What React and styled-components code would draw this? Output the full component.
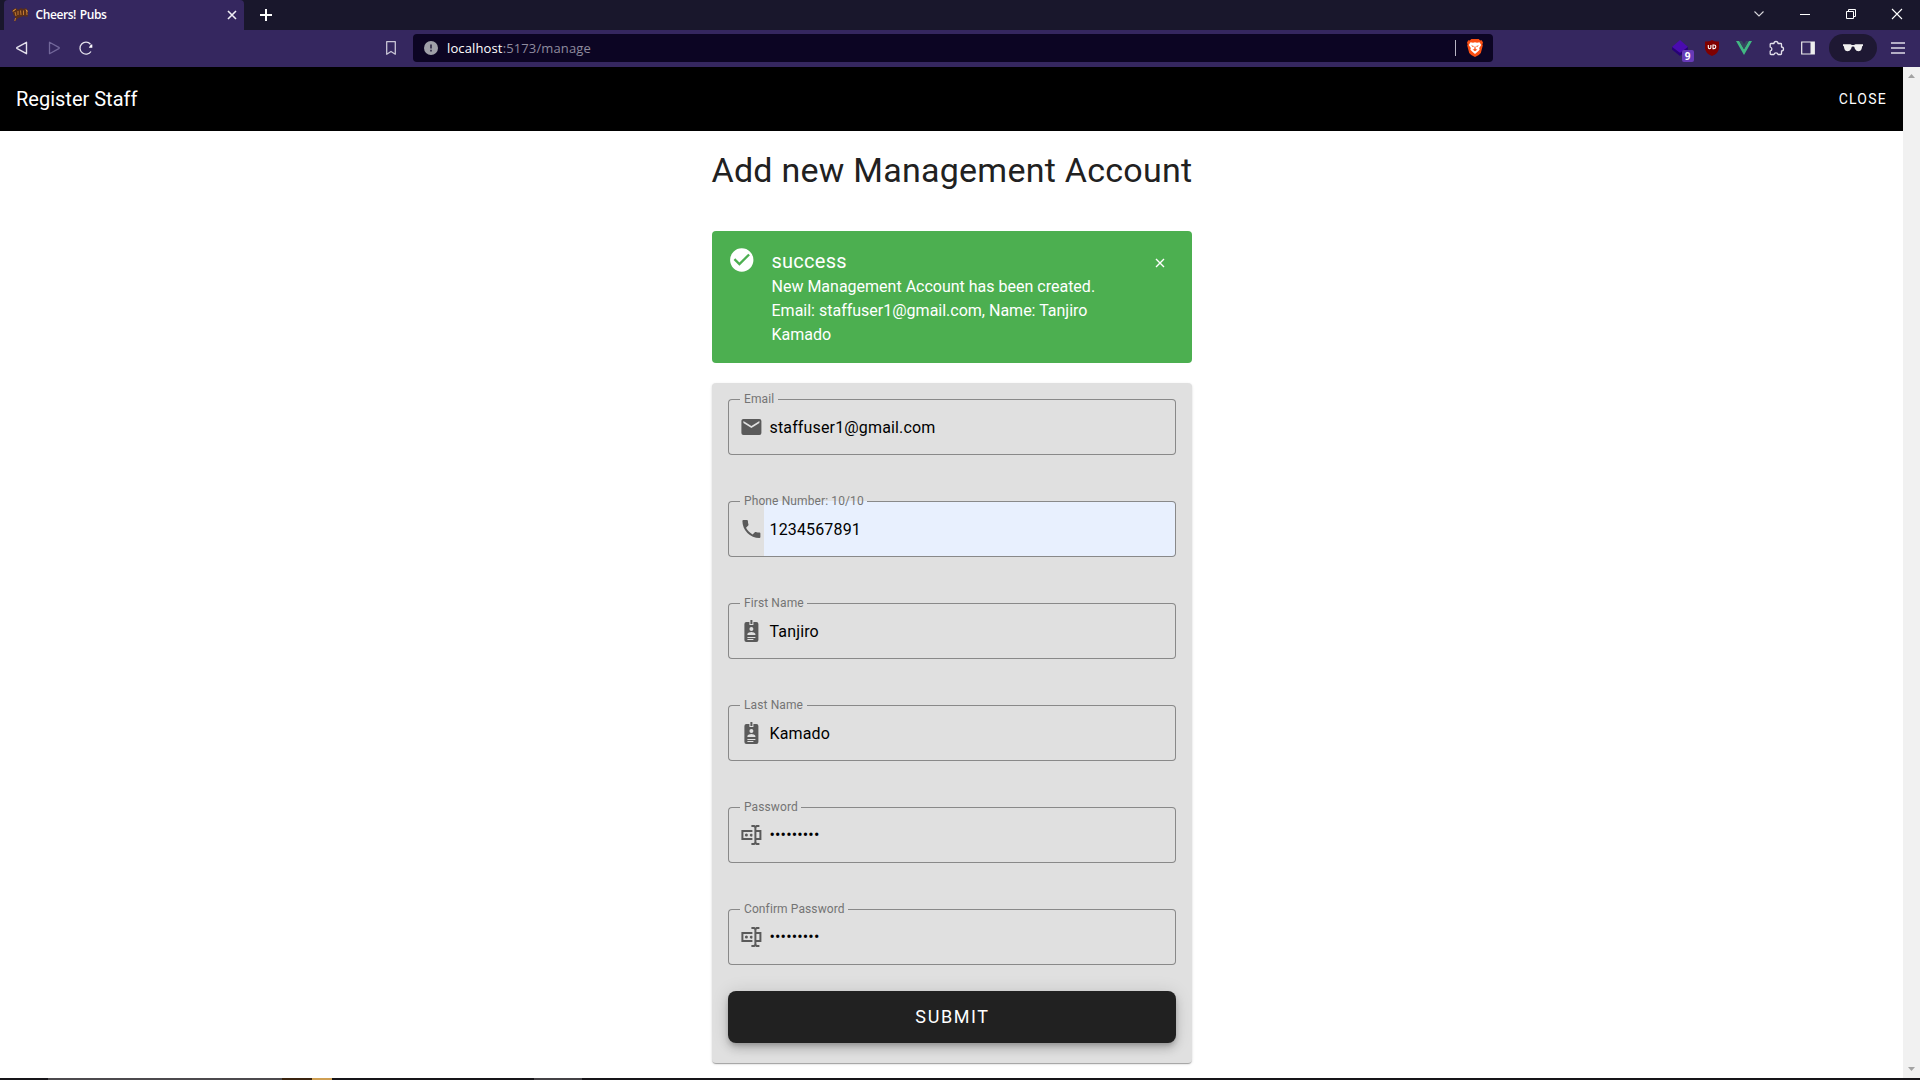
import React from "react";
import styled, { createGlobalStyle, css } from "styled-components";

const Global = createGlobalStyle`
  *, *::before, *::after { box-sizing: border-box; }
  html, body { margin: 0; padding: 0; background: #fff; overflow: hidden; }
  body { font-family: Roboto, "Liberation Sans", sans-serif; font-size: 16px; line-height: 24px; }
`;

const Screen = styled.div`
  width: 1920px; height: 1080px; display: flex; flex-direction: column; overflow: hidden; background: #fff;
`;

/* browser chrome */
const TabStrip = styled.div`
  height: 30px; flex: none; display: flex; background: #19172c; padding-left: 4px;
`;
const Tab = styled.div`
  width: 240px; height: 30px; display: flex; align-items: center; padding: 0 7px 0 8px;
  background: #35275f; border-radius: 4px 4px 0 0; color: #fff;
`;
const TabTitle = styled.span`
  flex: 1; margin-left: 6.5px; font: 600 12px/16px "Open Sans", "Noto Sans", sans-serif; letter-spacing: -0.41px; word-spacing: 1px;
`;
const Glyph = styled.svg`
  display: block; flex: none; overflow: visible;
`;
const NewTab = styled.div`
  width: 44px; display: flex; align-items: center; justify-content: center;
`;
const WindowControls = styled.div`
  margin-left: auto; display: flex; height: 28px;
`;
const Control = styled.div`
  width: 46px; display: flex; align-items: center; justify-content: center;
`;
const Toolbar = styled.div`
  height: 37px; flex: none; display: flex; align-items: center; background: #35275f; padding: 0 0 1px 6px;
`;
const ToolButton = styled.div`
  width: 32px; height: 36px; display: flex; align-items: center; justify-content: center;
`;
const BookmarkSlot = styled.div`
  width: 32px; height: 36px; display: flex; align-items: center; justify-content: center; margin-left: 273px;
`;
const AddressBar = styled.div`
  width: 1080px; height: 28px; margin-left: 6px; display: flex; align-items: center; background: #0c0523;
  border-radius: 4px; padding: 0 10px 0 11px;
`;
const Url = styled.span`
  flex: 1; margin-left: 9px; color: #8f8b9e; font: 400 13px/20px "Open Sans", "Noto Sans", sans-serif; letter-spacing: 0.13px;
`;
const Host = styled.span` color: #fff; `;
const Separator = styled.div`
  width: 1px; height: 16px; background: #b8b5c3; margin-right: 11px;
`;
const Extensions = styled.div`
  margin-left: auto; display: flex; align-items: center; padding-right: 6px;
`;
const ExtensionButton = styled.div`
  width: 32px; height: 36px; display: flex; align-items: center; justify-content: center; position: relative;
`;
const Badge = styled.span`
  position: absolute; left: 17.5px; top: 20px; width: 12px; height: 12px; border-radius: 2px; background: #673ab7;
  color: #fff; font: 700 10px/12px "Open Sans", sans-serif; text-align: center;
`;
const PrivatePill = styled.div`
  width: 48px; height: 28px; border-radius: 14px; background: #1e1833; margin: 0 5px;
  display: flex; align-items: center; justify-content: center;
`;

/* page */
const Viewport = styled.div` flex: 1; min-height: 0; display: flex; `;
const Page = styled.div` flex: 1; display: flex; flex-direction: column; background: #fff; `;
const AppBar = styled.header`
  height: 64px; flex: none; display: flex; align-items: center; justify-content: space-between;
  padding: 0 16px; background: #000; color: #fff;
`;
const AppTitle = styled.div` font-size: 20px; line-height: 30px; `;
const CloseButton = styled.button`
  border: 0; padding: 0; background: none; color: #fff; font: 400 14px/36px Roboto, sans-serif;
  letter-spacing: 1.25px; text-transform: uppercase;
`;
const Main = styled.main` width: 480px; margin: 0 auto; display: flex; flex-direction: column; `;
const Heading = styled.h1`
  margin: 15px 0 37px; font: 400 34px/48px Roboto, sans-serif; letter-spacing: 0.25px; color: #212121; white-space: nowrap;
`;
const Alert = styled.section`
  height: 132px; display: flex; padding: 15px 16px 16px; background: #4caf50; color: #fff; border-radius: 4px;
`;
const AlertBody = styled.div` width: 346px; margin: 1px 0 0 16px; `;
const AlertTitle = styled.div` font: 400 20px/28px Roboto, sans-serif; letter-spacing: 0.25px; `;
const AlertText = styled.p` margin: 0; font: 400 16px/24px Roboto, sans-serif; letter-spacing: 0; `;
const Dismiss = styled.div` margin: 12px 0 0 37px; `;
const Card = styled.form`
  margin-top: 20px; height: 680px; padding: 16px; display: flex; flex-direction: column; gap: 46px;
  background: #e0e0e0; border-radius: 4px;
  box-shadow: 0 2px 1px -1px rgba(0,0,0,.2), 0 1px 1px rgba(0,0,0,.14), 0 1px 3px rgba(0,0,0,.12);
`;
const Field = styled.div`
  position: relative; height: 56px; flex: none; display: flex; align-items: center; padding-left: 11px;
`;
const FieldIcon = styled.div`
  width: 24px; height: 24px; margin-right: 1px; display: flex; color: #5a5a5a;
`;
const Value = styled.div`
  flex: 1; height: 56px; display: flex; align-items: center; color: #000;
  padding: ${(p) => (p.$secret ? "0" : "2px")} 0 0 6px;
  font-size: 16px; letter-spacing: 0.15px;
  ${(p) => p.$filled && css`background: #e8f0fe; border-radius: 0 4px 4px 0;`}
`;
const Outline = styled.div` position: absolute; inset: 0; display: flex; pointer-events: none; `;
const OutlineStart = styled.div`
  width: 12px; border: 1px solid #898989; border-right: 0; border-radius: 4px 0 0 4px;
`;
const OutlineNotch = styled.div`
  border-bottom: 1px solid #898989; padding: 0 3.5px 0 4.5px;
`;
const Label = styled.span`
  display: block; margin-top: -10px; font-size: 12px; line-height: 20px; letter-spacing: 0.11px; color: #747474; white-space: nowrap;
`;
const OutlineEnd = styled.div`
  flex: 1; border: 1px solid #898989; border-left: 0; border-radius: 0 4px 4px 0;
`;
const Submit = styled.button`
  height: 52px; flex: none; margin-top: -20px; border: 0; border-radius: 8px; background: #212121; color: #fff;
  padding: 0 0 1px 2px; font: 400 18px/51px Roboto, sans-serif; letter-spacing: 1.6px;
  box-shadow: 0 3px 5px -1px rgba(0,0,0,.2), 0 6px 10px rgba(0,0,0,.14), 0 1px 18px rgba(0,0,0,.12);
`;
const Scrollbar = styled.div`
  width: 17px; display: flex; flex-direction: column; justify-content: space-between; align-items: center;
  background: #f1f1f1; padding: 7px 0;
`;
const Taskbar = styled.div` height: 2px; flex: none; display: flex; background: #171519; `;
const Slice = styled.div` width: ${(p) => p.$w}px; background: ${(p) => p.$c}; `;

const paths = {
  email: "m20 8l-8 5l-8-5V6l8 5l8-5m0-2H4c-1.11 0-2 .89-2 2v12a2 2 0 0 0 2 2h16a2 2 0 0 0 2-2V6a2 2 0 0 0-2-2",
  phone: "M6.62 10.79c1.44 2.83 3.76 5.15 6.59 6.59l2.2-2.2c.28-.28.67-.36 1.02-.25c1.12.37 2.32.57 3.57.57a1 1 0 0 1 1 1V20a1 1 0 0 1-1 1A17 17 0 0 1 3 4a1 1 0 0 1 1-1h3.5a1 1 0 0 1 1 1c0 1.25.2 2.45.57 3.57c.11.35.03.74-.25 1.02z",
  badge: "M17 3h-3v3h-4V3H7a2 2 0 0 0-2 2v16a2 2 0 0 0 2 2h10a2 2 0 0 0 2-2V5a2 2 0 0 0-2-2m-5 5a2 2 0 0 1 2 2a2 2 0 0 1-2 2a2 2 0 0 1-2-2a2 2 0 0 1 2-2m4 8H8v-1c0-1.33 2.67-2 4-2s4 .67 4 2zm-3-11h-2V1h2zm3 14H8v-1h8zm-2 2H8v-1h6z",
  password: "M17 7h5v10h-5v2a1 1 0 0 0 1 1h2v2h-2.5c-.55 0-1.5-.45-1.5-1c0 .55-.95 1-1.5 1H12v-2h2a1 1 0 0 0 1-1V5a1 1 0 0 0-1-1h-2V2h2.5c.55 0 1.5.45 1.5 1c0-.55.95-1 1.5-1H20v2h-2a1 1 0 0 0-1 1zM2 7h11v2H4v6h9v2H2zm18 8V9h-3v6zM8.5 12A1.5 1.5 0 0 0 7 10.5A1.5 1.5 0 0 0 5.5 12A1.5 1.5 0 0 0 7 13.5A1.5 1.5 0 0 0 8.5 12m4.500-.890c-.6-.610-1.590-.610-2.100 0c-.590.590-.590 1.540 0 2.120c.510.610 1.500.610 2.100 0z",
};

const fields = [
  { label: "Email", icon: "email", value: "staffuser1@gmail.com" },
  { label: "Phone Number: 10/10", icon: "phone", value: "1234567891", filled: true },
  { label: "First Name", icon: "badge", value: "Tanjiro" },
  { label: "Last Name", icon: "badge", value: "Kamado" },
  { label: "Password", icon: "password", value: "•••••••••", secret: true },
  { label: "Confirm Password", icon: "password", value: "•••••••••", secret: true },
];

function TextField({ label, icon, value, filled, secret }) {
  return (
    <Field>
      <FieldIcon>
        <Glyph width="24" height="24" viewBox="-0.4 0 24 24" fill="currentColor"><path d={paths[icon]} /></Glyph>
      </FieldIcon>
      <Value $filled={filled} $secret={secret}>{value}</Value>
      <Outline>
        <OutlineStart />
        <OutlineNotch><Label>{label}</Label></OutlineNotch>
        <OutlineEnd />
      </Outline>
    </Field>
  );
}

function BrowserTabs() {
  return (
    <TabStrip>
      <Tab>
        <Glyph width="17" height="17" viewBox="0 0 17 17">
          <path d="M0 3l4-2 2 2 3-2 2 1 3-1 2 3-.5 6-3.500-1-3 1-3 1-3.500 4 1-5L1.500 8z" fill="#5a2f1a" />
          <path d="M1 4l3-2M3 5l1 4M6 4v4M8.500 3.500L9 8M11.500 3.500v4.500M14.500 3l.5 5M3.500 11l-.7 3" stroke="#c27a30" strokeWidth="1" />
          <path d="M1 4.500l2-2M14 2.500l1.500 2" stroke="#e2a04a" strokeWidth="1" />
        </Glyph>
        <TabTitle>Cheers! Pubs</TabTitle>
        <Glyph width="10" height="10" viewBox="0 0 10 10"><path d="M1 1l8 8M9 1L1 9" stroke="#f0eef5" strokeWidth="1.6" /></Glyph>
      </Tab>
      <NewTab><Glyph width="12" height="12" viewBox="0 0 12 12"><path d="M6 0v12M0 6h12" stroke="#fff" strokeWidth="2" /></Glyph></NewTab>
      <WindowControls>
        <Control><Glyph width="10" height="6" viewBox="0 0 10 6"><path d="M.5.5L5 5 9.500.5" fill="none" stroke="#d8d7dc" strokeWidth="1.1" /></Glyph></Control>
        <Control><Glyph width="10" height="1" viewBox="0 0 10 1"><path d="M0 .5h10" stroke="#fff" /></Glyph></Control>
        <Control><Glyph width="10" height="10" viewBox="0 0 10 10"><path d="M.5 2.500h7v7h-7zM2.500 2.500v-2h7v7h-2" fill="none" stroke="#fff" /></Glyph></Control>
        <Control><Glyph width="10" height="10" viewBox="0 0 10 10"><path d="M0 0l10 10M10 0L0 10" stroke="#fff" strokeWidth="1.1" /></Glyph></Control>
      </WindowControls>
    </TabStrip>
  );
}

function BrowserToolbar() {
  return (
    <Toolbar>
      <ToolButton><Glyph width="12" height="14" viewBox="0 0 12 14"><path d="M10.500 1.300v11.400L1.200 7.600q-1-.6 0-1.200z" fill="none" stroke="#e4e1ec" strokeWidth="1.400" strokeLinejoin="round" /></Glyph></ToolButton>
      <ToolButton><Glyph width="12" height="14" viewBox="0 0 12 14"><path d="M1.500 1.300v11.400l9.300-5.100q1-.6 0-1.200z" fill="none" stroke="#72679a" strokeWidth="1.300" strokeLinejoin="round" /></Glyph></ToolButton>
      <ToolButton><Glyph width="14" height="14" viewBox="0 0 14 14"><path d="M12 10.500A6 6 0 1 1 11.500 3.200" fill="none" stroke="#e4e1ec" strokeWidth="1.300" /><path d="M13.300 3.500v3.200H9.800q1-2.200 2.500-3.200z" fill="#fff" /></Glyph></ToolButton>
      <BookmarkSlot><Glyph width="10" height="14" viewBox="0 0 10 14"><path d="M.7.7h8.600v12.500L5 10.500.7 13.200z" fill="none" stroke="#c9c5d6" strokeWidth="1.300" strokeLinejoin="round" /></Glyph></BookmarkSlot>
      <AddressBar>
        <Glyph width="14" height="14" viewBox="0 0 14 14"><circle cx="7" cy="7" r="7" fill="#9fa0a8" /><path d="M7 3.500v4M7 8.800v1.700" stroke="#2a2440" strokeWidth="1.600" /></Glyph>
        <Url><Host>localhost</Host>:5173/manage</Url>
        <Separator />
        <Glyph width="16" height="18" viewBox="0 0 16 18">
          <path d="M4.300 0h7.400l1.500 1.500 1.500-.2L16 3.500l-.6 2 .4 1-2 7.500-2 2L8 18l-3.800-2-2-2-2-7.500.4-1-.6-2 1.300-2.200 1.500.2z" fill="#fb4f13" />
          <path d="M3.500 3.300L6 3.700l2-.5 2 .5 2.500-.4 1.700 2.800-2 3 .4 1.700-2 2L8 15l-2.600-2.200-2-2 .4-1.700-2-3z" fill="#fff" />
          <path d="M4 6.300l2.800.7-.7 1.200zM12 6.300l-2.800.7.700 1.200zM5.500 10.500L7.300 10.200 7.500 7.500h1l.2 2.700 1.800.3L8 12.200z" fill="#fb4f13" />
        </Glyph>
      </AddressBar>
      <Extensions>
        <ExtensionButton>
          <Glyph width="16" height="16" viewBox="0 0 16 16"><path d="M8 0l8 7-8 6-8-6z" fill="#4a0bb0" /><path d="M0 7l8 6 8-6v2.500L8 16 0 9.500z" fill="#270079" /></Glyph>
          <Badge>9</Badge>
        </ExtensionButton>
        <ExtensionButton>
          <Glyph width="14" height="16" viewBox="0 0 14 16"><path d="M7 0q3 2 7 1.500V8q0 5-7 8-7-3-7-8V1.500Q4 2 7 0z" fill="#800000" /><path d="M3.300 5v2.200q0 1.400 1.300 1.400t1.300-1.400V5M8 5v3.600h1q1.800 0 1.800-1.800T9 5z" fill="none" stroke="#fff" strokeWidth="1.100" /></Glyph>
        </ExtensionButton>
        <ExtensionButton>
          <Glyph width="16" height="14" viewBox="0 0 16 14"><path d="M0 0h3.200L8 8.300 12.800 0H16L8 14z" fill="#42b883" /><path d="M3.200 0H6l2 3.400L10 0h2.800L8 8.300z" fill="#35495e" /></Glyph>
        </ExtensionButton>
        <ExtensionButton>
          <Glyph width="15" height="15" viewBox="0 0 15 15"><path d="M1.200 3.200Q1.200 2.500 2 2.500H5a2 2 0 0 1 4 0h2.700q.8 0 .8.800V6a2 2 0 0 1 0 4v2.700q0 .8-.8.800H9q-.3-1.600-2-1.600T5 13.500H2q-.8 0-.8-.8V10q1.700-.5 1.700-2T1.200 6z" fill="none" stroke="#e4e1ec" strokeWidth="1.300" strokeLinejoin="round" /></Glyph>
        </ExtensionButton>
        <ExtensionButton>
          <Glyph width="14" height="14" viewBox="0 0 14 14"><path d="M.7 1h12.600v12H.7z" fill="none" stroke="#eee" strokeWidth="1.200" /><path d="M9.500 1H13v12H9.500z" fill="#eee" /></Glyph>
        </ExtensionButton>
        <PrivatePill>
          <Glyph width="20" height="8" viewBox="0 0 20 8"><path d="M0 .3h7.500l1.500.7h2l1.500-.7H20v1.500l-.8.5-.7 3Q17.800 7.300 15.500 7.300T12 5l-.8-2.200q-1.200-.8-2.400 0L8 5Q6.800 7.300 4.500 7.300T1.500 5.300l-.7-3-.8-.5z" fill="#f1f0f0" /></Glyph>
        </PrivatePill>
        <ToolButton><Glyph width="14" height="12" viewBox="0 0 14 12"><path d="M0 1h14M0 6h14M0 11h14" stroke="#dedbe7" strokeWidth="1.300" /></Glyph></ToolButton>
      </Extensions>
    </Toolbar>
  );
}

export default function App() {
  return (
    <Screen>
      <Global />
      <BrowserTabs />
      <BrowserToolbar />
      <Viewport>
        <Page>
          <AppBar>
            <AppTitle>Register Staff</AppTitle>
            <CloseButton>Close</CloseButton>
          </AppBar>
          <Main>
            <Heading>Add new Management Account</Heading>
            <Alert>
              <Glyph width="28" height="28" viewBox="0.2 0 24 24"><path d="M12 2a10 10 0 1 0 0 20 10 10 0 0 0 0-20m-2 15-5-5 1.410-1.410L10 14.170l7.590-7.590L19 8z" fill="#fff" /></Glyph>
              <AlertBody>
                <AlertTitle>success</AlertTitle>
                <AlertText>New Management Account has been created.<br />Email: staffuser1@gmail.com, Name: Tanjiro Kamado</AlertText>
              </AlertBody>
              <Dismiss><Glyph width="10" height="10" viewBox="0 0 10 10"><path d="M1 1l8 8M9 1L1 9" stroke="#fff" strokeWidth="1.400" /></Glyph></Dismiss>
            </Alert>
            <Card>
              {fields.map((f) => <TextField key={f.label} {...f} />)}
              <Submit type="button">SUBMIT</Submit>
            </Card>
          </Main>
        </Page>
        <Scrollbar>
          <Glyph width="7" height="4" viewBox="0 0 7 4"><path d="M0 4h7L3.500 0z" fill="#a3a3a3" /></Glyph>
          <Glyph width="7" height="4" viewBox="0 0 7 4"><path d="M0 0h7L3.500 4z" fill="#a3a3a3" /></Glyph>
        </Scrollbar>
      </Viewport>
      <Taskbar>
        <Slice $w={48} $c="#171519" /><Slice $w={234} $c="#4c4a4d" /><Slice $w={30} $c="#3a2410" />
        <Slice $w={20} $c="#cf9f52" /><Slice $w={202} $c="#171519" /><Slice $w={48} $c="#444246" />
      </Taskbar>
    </Screen>
  );
}
